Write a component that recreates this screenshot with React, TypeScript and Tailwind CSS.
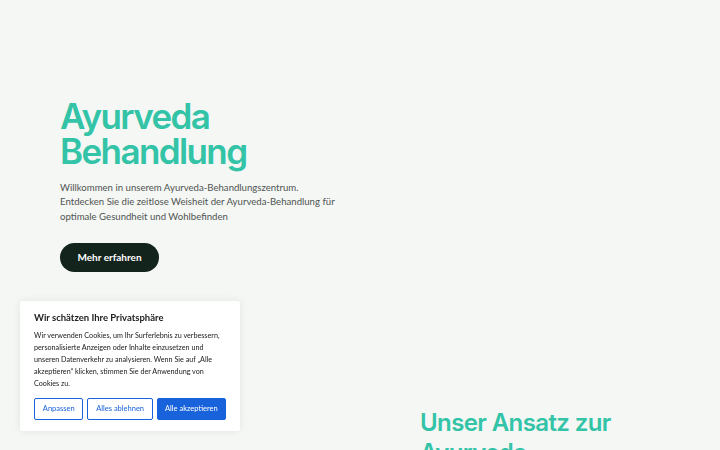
export default function App() {
  return (
    <div className="min-h-screen bg-[#f5f7f5] overflow-hidden" style={{ fontFamily: '"Nunito", "Lato", "Noto Sans", sans-serif' }}>
      <section className="pl-[60px] pt-[99px] h-[398px]">
        <h1 className="text-[35px] leading-[35px] font-semibold text-[#33c3a7] tracking-[-1.6px]" style={{ fontFamily: 'Inter, sans-serif' }}>
          Ayurveda<br />Behandlung
        </h1>
        <p className="mt-[12px] text-[9.6px] leading-[14.3px] text-[#4f5451] w-[282px]" style={{ fontFamily: 'Lato, sans-serif' }}>
          Willkommen in unserem Ayurveda-Behandlungszentrum.<br />Entdecken Sie die zeitlose Weisheit der Ayurveda-Behandlung für optimale Gesundheit und Wohlbefinden
        </p>
        <button className="mt-[19px] h-[29px] w-[99px] rounded-full bg-[#13241c] text-white text-[10px] font-bold" style={{ fontFamily: 'Lato, sans-serif' }}>
          Mehr erfahren
        </button>
      </section>
      <section className="grid grid-cols-[420px_1fr]">
        <div />
        <h2 className="pt-[10px] text-[24px] leading-[30px] font-semibold text-[#33c3a7] tracking-[-0.6px]" style={{ fontFamily: 'Inter, sans-serif' }}>
          Unser Ansatz zur<br />Ayurveda
        </h2>
      </section>
      <div className="fixed left-[20px] top-[301px] w-[220px] bg-white rounded-[3px] shadow-[0_0_8px_rgba(0,0,0,0.08)] px-[14px] pt-[10px] pb-[11px]" style={{ fontFamily: 'Lato, sans-serif' }}>
        <div className="text-[9.5px] font-bold text-[#212121] leading-[14px]">Wir schätzen Ihre Privatsphäre</div>
        <p className="mt-[5px] text-[7.2px] leading-[12px] text-[#212121]">
          Wir verwenden Cookies, um Ihr Surferlebnis zu verbessern, personalisierte Anzeigen oder Inhalte einzusetzen und unseren Datenverkehr zu analysieren. Wenn Sie auf „Alle akzeptieren“ klicken, stimmen Sie der Anwendung von Cookies zu.
        </p>
        <div className="mt-[8px] flex gap-[4px]">
          <button className="h-[22px] w-[50px] border-[1.5px] border-[#1863dc] text-[#1863dc] text-[7.5px] rounded-[2px] bg-white">Anpassen</button>
          <button className="h-[22px] w-[66px] border-[1.5px] border-[#1863dc] text-[#1863dc] text-[7.5px] rounded-[2px] bg-white">Alles ablehnen</button>
          <button className="h-[22px] w-[70px] border-[1.5px] border-[#1863dc] bg-[#1863dc] text-white text-[7.5px] rounded-[2px]">Alle akzeptieren</button>
        </div>
      </div>
    </div>
  );
}
